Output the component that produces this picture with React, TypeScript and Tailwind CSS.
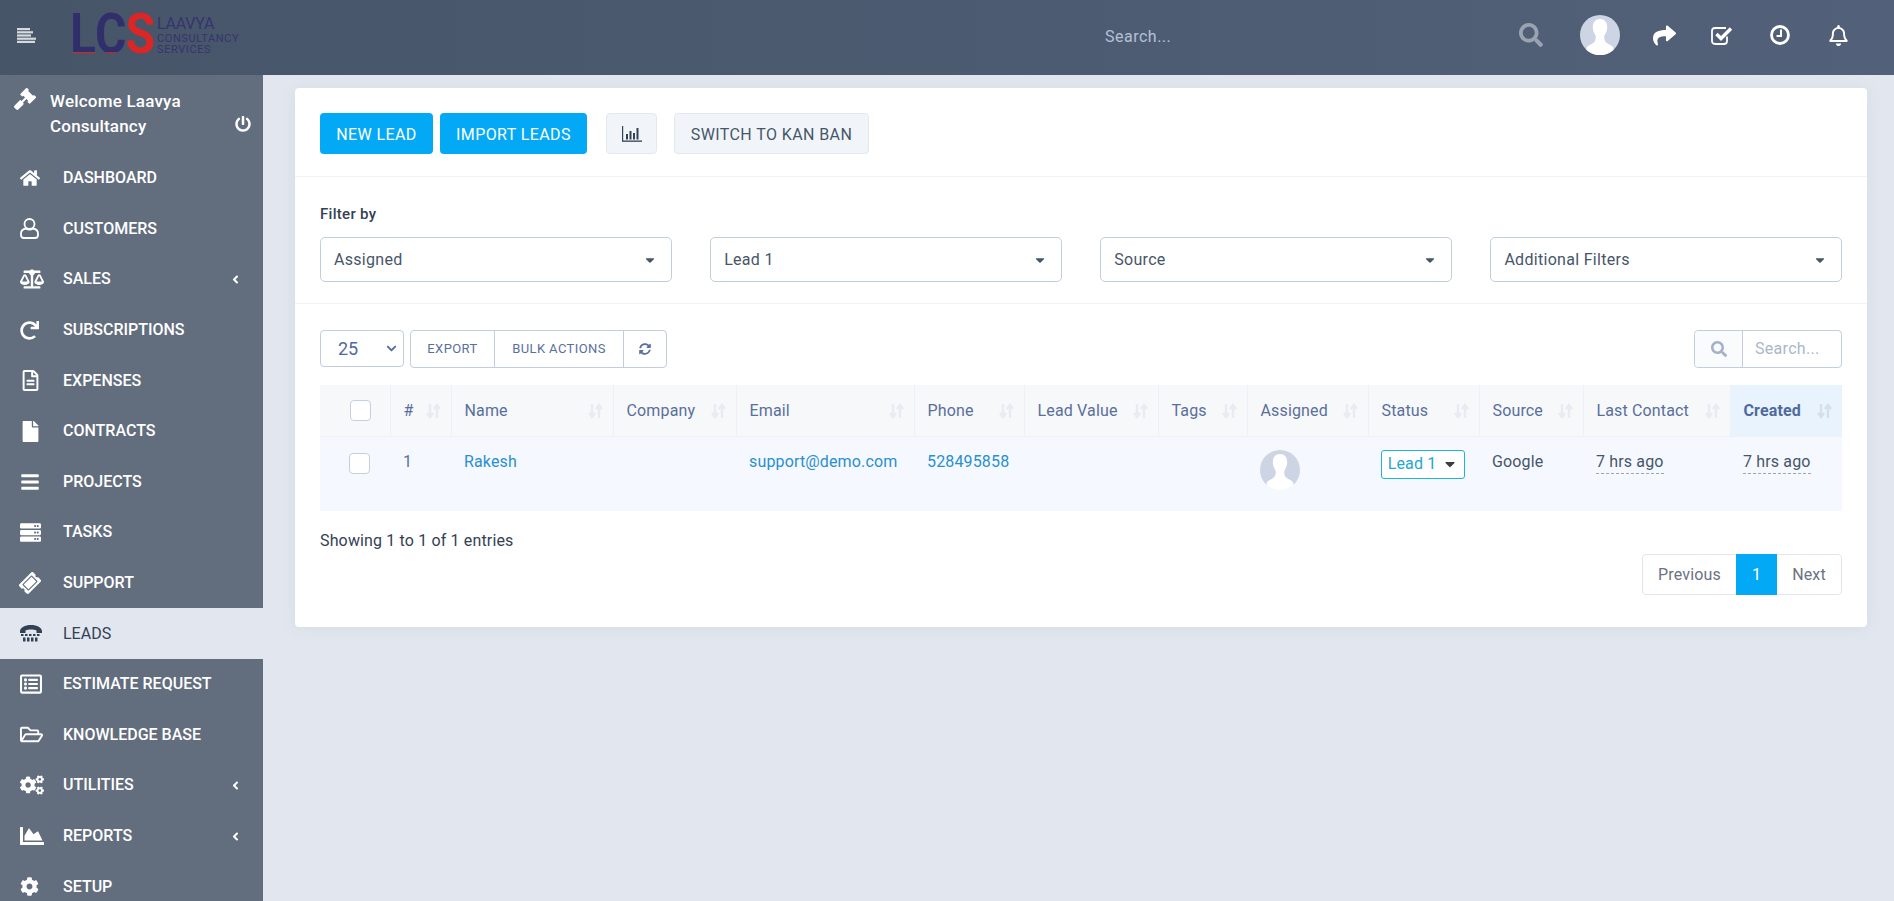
import React from "react";
import {
  FaAngleLeft,
  FaBalanceScale,
  FaBars,
  FaCaretDown,
  FaChartArea,
  FaChevronDown,
  FaCog,
  FaCogs,
  FaFile,
  FaGavel,
  FaHome,
  FaPowerOff,
  FaRedo,
  FaRegBell,
  FaRegFileAlt,
  FaRegFolderOpen,
  FaRegListAlt,
  FaSearch,
  FaShare,
  FaSyncAlt,
  FaTicketAlt,
  FaServer,
} from "react-icons/fa";

const UserIcon = () => (
  <svg width="19" height="21" viewBox="0 0 19 21" fill="none" stroke="currentColor" strokeWidth="1.8">
    <ellipse cx="9.500" cy="6" rx="5" ry="5" />
    <path d="M6 10.500C3 11 1 12.500 1 15.500v1.500c0 1.700 1 3 3 3h11c2 0 3-1.300 3-3v-1.500c0-3-2-4.500-5-5-1 .8-2.200 1.200-3.500 1.200S7 11.300 6 10.500z" />
  </svg>
);

const PhoneIcon = () => (
  <svg width="22" height="17" viewBox="0 0 22 17" fill="currentColor">
    <path d="M0 6.500C0 2.500 5 0 11 0s11 2.500 11 6.500V8h-5.500V5.500c-1.500-.6-3.500-.9-5.500-.9s-4 .3-5.500.9V8H0z" />
    <rect x="1" y="9" width="2.500" height="2" />
    <rect x="5" y="9" width="2.500" height="2" />
    <rect x="9" y="9" width="2.500" height="2" />
    <rect x="13" y="9" width="2.500" height="2" />
    <rect x="17" y="9" width="2.500" height="2" />
    <rect x="3" y="12.500" width="2.500" height="4" />
    <rect x="7" y="12.500" width="2.500" height="4" />
    <rect x="11" y="12.500" width="2.500" height="4" />
    <rect x="15" y="12.500" width="2.500" height="4" />
  </svg>
);

const navItems = [
  { label: "DASHBOARD", icon: <FaHome size={20} /> },
  { label: "CUSTOMERS", icon: <UserIcon /> },
  { label: "SALES", icon: <FaBalanceScale size={24} />, arrow: true },
  { label: "SUBSCRIPTIONS", icon: <FaRedo size={19} /> },
  { label: "EXPENSES", icon: <FaRegFileAlt size={21} /> },
  { label: "CONTRACTS", icon: <FaFile size={21} /> },
  { label: "PROJECTS", icon: <FaBars size={20} /> },
  { label: "TASKS", icon: <FaServer size={21} /> },
  { label: "SUPPORT", icon: <FaTicketAlt size={20} className="-rotate-45" /> },
  { label: "LEADS", icon: <PhoneIcon />, active: true },
  { label: "ESTIMATE REQUEST", icon: <FaRegListAlt size={22} /> },
  { label: "KNOWLEDGE BASE", icon: <FaRegFolderOpen size={23} /> },
  { label: "UTILITIES", icon: <FaCogs size={24} />, arrow: true },
  { label: "REPORTS", icon: <FaChartArea size={24} />, arrow: true },
  { label: "SETUP", icon: <FaCog size={19} /> },
];

const columns = [
  { label: "", width: "w-[70px]" },
  { label: "#", width: "w-[61px]" },
  { label: "Name", width: "w-[162px]" },
  { label: "Company", width: "w-[123px]" },
  { label: "Email", width: "w-[178px]" },
  { label: "Phone", width: "w-[110px]" },
  { label: "Lead Value", width: "w-[134px]" },
  { label: "Tags", width: "w-[89px]" },
  { label: "Assigned", width: "w-[121px]" },
  { label: "Status", width: "w-[111px]" },
  { label: "Source", width: "w-[104px]" },
  { label: "Last Contact", width: "w-[147px]" },
  { label: "Created", width: "w-[112px]" },
];

const filters = ["Assigned", "Lead 1", "Source", "Additional Filters"];

const SortIcon = ({ dark }: { dark?: boolean }) => (
  <svg width="17" height="16" viewBox="0 0 17 16" className={dark ? "text-[#d5dfea]" : "text-[#e8ecf2]"}>
    <path d="M5 1v12M2 10l3 4 3-4" fill="none" stroke="currentColor" strokeWidth="2.4" />
    <path d="M12 15V3M9 6l3-4 3 4" fill="none" stroke="currentColor" strokeWidth="2.4" />
  </svg>
);

const Avatar = ({ size }: { size: string }) => (
  <svg viewBox="0 0 40 40" className={size}>
    <circle cx="20" cy="20" r="20" fill="#cdd5e4" />
    <path
      d="M20 4c-4.600 0-7.200 3.300-7.200 8.200 0 3.300 1.200 5.600 2.400 7.600.9 1.600.6 3.600.2 5.200-.5 2.400-3.400 4-6.200 5.200C7 31.200 6.500 33 6.500 35a20 20 0 0 0 27 0c0-2-.5-3.800-2.700-4.800-2.800-1.200-5.700-2.800-6.200-5.200-.4-1.600-.7-3.600.2-5.200 1.200-2 2.400-4.300 2.400-7.600C27.200 7.300 24.600 4 20 4z"
      fill="#fff"
    />
  </svg>
);

const Checkbox = () => (
  <span className="block w-[21px] h-[21px] bg-white border border-[#c5cfdd] rounded-[4px]" />
);

export default function App() {
  return (
    <div className="h-screen overflow-hidden flex flex-col bg-[#e2e7ef] font-['Roboto',sans-serif] text-[16px] tracking-[0.15px] text-[#475569]">
      {/* Header */}
      <header className="h-[75px] shrink-0 flex items-center pb-[5px] bg-[linear-gradient(to_right,#475569,#526079)]">
        <div className="w-[70px] pl-[17px]">
          <svg width="19" height="15" viewBox="0 0 19 15" fill="#d6d9dd">
            <rect x="0" y="0" width="13" height="2.200" />
            <rect x="0" y="3.200" width="16" height="2.200" />
            <rect x="0" y="6.400" width="14" height="2.200" />
            <rect x="0" y="9.600" width="19" height="2.200" />
            <rect x="0" y="12.800" width="18" height="2.200" />
          </svg>
        </div>
        <div className="w-[1035px] flex items-center gap-[6px] tracking-normal">
          <div className="flex font-bold text-[48px] leading-[54px] tracking-[-1px] w-[81px] scale-y-[1.15]">
            <span className="text-transparent bg-clip-text bg-[linear-gradient(to_bottom,#312f6b_78%,#dc2626_78%)]">L</span>
            <span className="text-transparent bg-clip-text bg-[linear-gradient(to_bottom,#312f6b_78%,#dc2626_78%)]">C</span>
            <span className="text-[#dc2626]">S</span>
          </div>
          <div className="flex flex-col text-[#35346e] leading-[11px] text-[11px] tracking-[0.6px]">
            <span className="text-[16px] leading-[18px] tracking-[-0.2px]">LAAVYA</span>
            <span>CONSULTANCY</span>
            <span>SERVICES</span>
          </div>
        </div>
        <div className="tracking-[0.5px] pt-[3px] text-[#b4c0d4] w-[414px]">Search...</div>
        <FaSearch size={24} className="text-[#9aa3b1]" />
        <div className="ml-[37px]">
          <Avatar size="w-[40px] h-[40px]" />
        </div>
        <FaShare size={23} className="ml-[33px] text-white" />
        <svg width="23" height="21" viewBox="0 0 23 21" fill="none" className="ml-[35px] text-white" stroke="currentColor">
          <path d="M16 11.500V16c0 1.700-1 3-3 3H4c-2 0-3-1.300-3-3V6c0-2 1-3 3-3h11" strokeWidth="1.800" />
          <path d="M5.500 9l4.500 4.500L20 3.500" strokeWidth="3.400" />
        </svg>
        <svg width="20" height="20" viewBox="0 0 20 20" fill="none" className="ml-[36px] text-white" stroke="currentColor">
          <circle cx="10" cy="10" r="8.500" strokeWidth="2.800" />
          <path d="M11 4.500V11H6.500" strokeWidth="2" />
        </svg>
        <FaRegBell size={21} className="ml-[38px] text-white" />
      </header>

      <div className="flex flex-1 min-h-0">
        {/* Sidebar */}
        <aside className="w-[263px] shrink-0 bg-[#626d7e] text-white overflow-hidden">
          <div className="h-[78px] relative pl-[50px] pt-[14px] text-[17px] tracking-[0.2px] leading-[25px] font-medium">
            <FaGavel size={22} className="absolute left-[14px] top-[13px]" />
            <div className="w-[150px]">Welcome Laavya Consultancy</div>
            <FaPowerOff size={16} className="absolute left-[235px] top-[41px]" />
          </div>
          <nav>
            {navItems.map((item) => (
              <div
                key={item.label}
                className={
                  item.active
                    ? "h-[50.6px] flex items-center pl-[20px] pr-[21px] bg-[#e2e7ef] text-[#334155]"
                    : "h-[50.6px] flex items-center pl-[20px] pr-[21px]"
                }
              >
                <span className="w-[43px] shrink-0">{item.icon}</span>
                <span className={item.active ? "flex-1 tracking-normal" : "flex-1 font-medium tracking-normal"}>{item.label}</span>
                {item.arrow && <FaAngleLeft size={13} />}
              </div>
            ))}
          </nav>
        </aside>

        {/* Main */}
        <main className="flex-1 min-w-0 pt-[13px] pl-[32px] pr-[27px]">
          <div className="bg-white rounded-[4px] shadow-[0_1px_15px_rgba(100,116,139,0.1)]">
            <div className="flex items-center px-[25px] pt-[25px] pb-[22px] border-b border-[#f0f2f5] tracking-[0.4px]">
              <button className="h-[41px] w-[113px] pt-[2px] bg-[#03a9f4] text-white rounded-[4px]">NEW LEAD</button>
              <button className="h-[41px] w-[147px] pt-[2px] ml-[7px] bg-[#03a9f4] text-white rounded-[4px]">IMPORT LEADS</button>
              <button className="h-[41px] w-[51px] ml-[19px] bg-[#f1f5f9] border border-[#e2e8f0] rounded-[4px] flex items-center justify-center text-[#334155]">
                <svg width="20" height="16" viewBox="0 0 20 16" fill="currentColor">
                  <rect x="0" y="0" width="1.200" height="15" />
                  <rect x="0" y="14.500" width="20" height="1.300" />
                  <rect x="4" y="8" width="2" height="5.500" />
                  <rect x="7.500" y="5" width="2" height="8.500" />
                  <rect x="11" y="7" width="2" height="6.500" />
                  <rect x="14.500" y="2" width="2" height="11.500" />
                </svg>
              </button>
              <button className="h-[41px] w-[195px] pt-[2px] ml-[17px] bg-[#f1f5f9] border border-[#e2e8f0] rounded-[4px] text-[#475569]">
                SWITCH TO KAN BAN
              </button>
            </div>

            <div className="h-[127px] px-[25px] pt-[27px] border-b border-[#f0f2f5]">
              <div className="font-medium text-[15px] text-[#334155] tracking-[0.3px] leading-[20px] mb-[13px]">Filter by</div>
              <div className="grid grid-cols-4 gap-x-[38.5px]">
                {filters.map((f) => (
                  <div
                    key={f}
                    className="h-[45px] flex items-center justify-between pl-[13px] pr-[14px] border border-[#c2cddd] rounded-[5px] tracking-[0.3px] text-[#475569]"
                  >
                    {f}
                    <FaCaretDown size={14} className="text-[#475569]" />
                  </div>
                ))}
              </div>
            </div>

            <div className="px-[25px] pt-[26px] pb-[32px]">
              <div className="flex items-start justify-between">
                <div className="flex items-start">
                  <div className="w-[84px] h-[37px] flex items-center justify-between pl-[17px] pr-[6px] border border-[#c2cddd] rounded-[4px] text-[18px] tracking-normal text-[#4e6a9e]">
                    25
                    <FaChevronDown size={11} />
                  </div>
                  <div className="ml-[6px] h-[38px] flex items-center border border-[#c2cddd] rounded-[4px] text-[13px] tracking-[0.4px] text-[#5a6f9c]">
                    <span className="w-[84px] h-full flex items-center justify-center border-r border-[#c2cddd]">EXPORT</span>
                    <span className="w-[129px] h-full flex items-center justify-center border-r border-[#c2cddd]">BULK ACTIONS</span>
                    <span className="w-[42px] flex justify-center">
                      <FaSyncAlt size={12} />
                    </span>
                  </div>
                </div>
                <div className="w-[148px] h-[38px] flex border border-[#c2cddd] rounded-[4px]">
                  <span className="w-[48px] flex items-center justify-center bg-[#fafbfd] border-r border-[#c2cddd] text-[#a3b1c8] rounded-l-[4px]">
                    <FaSearch size={16} />
                  </span>
                  <span className="flex-1 pl-[12px] flex items-center tracking-[0.3px] text-[#a9b7cc]">Search...</span>
                </div>
              </div>

              <table className="w-[1522px] mt-[17px] table-fixed border-collapse">
                <thead>
                  <tr className="h-[51px] bg-[#f6f8fa] border-b border-[#ecf1f8]">
                    {columns.map((c, i) => (
                      <th
                        key={c.label + i}
                        className={
                          c.label === "Created"
                            ? `${c.width} relative bg-[#e9f3fd] px-[13px] pt-px text-left font-bold text-[#4e6a9e]`
                            : `${c.width} relative border-r border-[#ecf1f8] px-[13px] pt-px text-left font-normal text-[#5a6f9c]`
                        }
                      >
                        {i === 0 ? (
                          <span className="block ml-[17px]">
                            <Checkbox />
                          </span>
                        ) : (
                          <>
                            {c.label}
                            <span className="absolute right-[9px] top-[18px]">
                              <SortIcon dark={c.label === "Created"} />
                            </span>
                          </>
                        )}
                      </th>
                    ))}
                  </tr>
                </thead>
                <tbody>
                  <tr className="h-[75px] bg-[#f5f9ff] align-top text-left">
                    <td className="pt-[16px]">
                      <span className="block ml-[29px]">
                        <Checkbox />
                      </span>
                    </td>
                    <td className="px-[13px] pt-[13px] text-[#5a6f9c]">1</td>
                    <td className="px-[13px] pt-[13px] text-[#2a8fcf]">Rakesh</td>
                    <td />
                    <td className="px-[13px] pt-[13px] text-[#2a8fcf]">support@demo.com</td>
                    <td className="px-[13px] pt-[13px] text-[#2a8fcf]">528495858</td>
                    <td />
                    <td />
                    <td className="px-[13px] pt-[13px]">
                      <Avatar size="w-[40px] h-[40px]" />
                    </td>
                    <td className="px-[13px] pt-[13px]">
                      <span className="w-[84px] h-[29px] flex items-center justify-center gap-[6px] border border-[#1fb3d6] rounded-[3px] text-[#26a6d1] bg-white">
                        Lead 1
                        <FaCaretDown size={16} className="text-[#3d3d3d]" />
                      </span>
                    </td>
                    <td className="px-[13px] pt-[13px] text-[#475569]">Google</td>
                    <td className="px-[13px] pt-[13px]">
                      <span className="border-b border-dashed border-[#9aa5b5] pb-[2px] text-[#475569]">7 hrs ago</span>
                    </td>
                    <td className="px-[13px] pt-[13px]">
                      <span className="border-b border-dashed border-[#9aa5b5] pb-[2px] text-[#475569]">7 hrs ago</span>
                    </td>
                  </tr>
                </tbody>
              </table>

              <div className="mt-[20px] leading-[20px] text-[#334155]">Showing 1 to 1 of 1 entries</div>
              <div className="flex justify-end mt-[3px]">
                <div className="h-[41px] flex items-center border border-[#e2e6ec] rounded-[4px] text-[#6b7280]">
                  <span className="w-[93px] text-center">Previous</span>
                  <span className="w-[41px] h-[41px] flex items-center justify-center bg-[#03a9f4] text-white">1</span>
                  <span className="w-[64px] text-center">Next</span>
                </div>
              </div>
            </div>
          </div>
        </main>
      </div>
    </div>
  );
}
